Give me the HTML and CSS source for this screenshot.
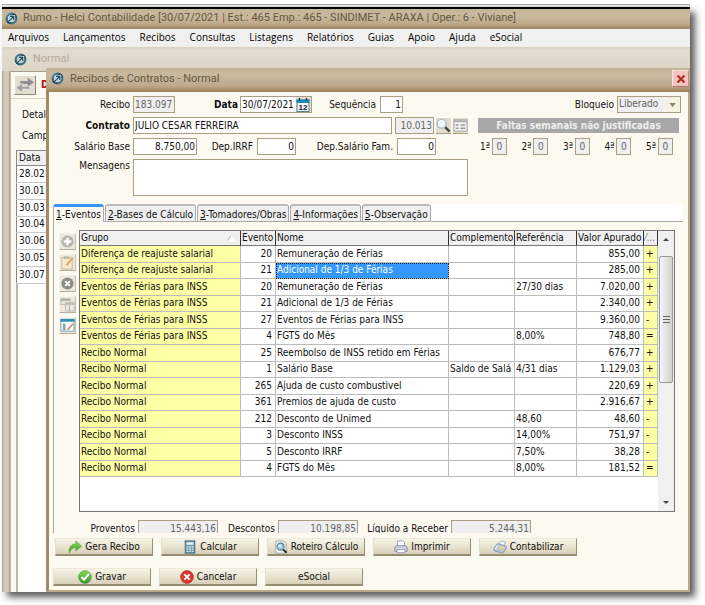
FILE: index.html
```html
<!DOCTYPE html>
<html lang="pt-BR">
<head>
<meta charset="utf-8">
<title>Rumo - Helci Contabilidade</title>
<link rel="stylesheet" href="styles.css">
</head>
<body>
<svg class="defs" aria-hidden="true">
  <defs>
    <linearGradient id="teal" x1="0" y1="0" x2="1" y2="1"><stop offset="0" stop-color="#5f9fb4"/><stop offset=".5" stop-color="#123a50"/><stop offset="1" stop-color="#4d93ab"/></linearGradient>
    <linearGradient id="green" x1="0" y1="0" x2="0" y2="1"><stop offset="0" stop-color="#8fdc5a"/><stop offset="1" stop-color="#2f9422"/></linearGradient>
    <symbol id="logo" viewBox="0 0 14 14">
      <circle cx="7" cy="7" r="5.2" fill="#c5d0cf" stroke="url(#teal)" stroke-width="2.4"/>
      <path d="M3.6 10.4 9 5M5.4 4.4h4.2v4.2" fill="none" stroke="#fff" stroke-width="2.6"/>
      <path d="M3.2 10.8 9 5M5.4 4.6h4v4" fill="none" stroke="#1b4f68" stroke-width="1.5"/>
    </symbol>
  </defs>
</svg>
<div class="app">
  <header class="titlebar app-title"><svg class="logo"><use href="#logo"/></svg><span>Rumo - Helci Contabilidade [30/07/2021 | Est.: 465 Emp.: 465 - SINDIMET - ARAXA | Oper.: 6 - Viviane]</span></header>
  <nav class="menu">
    <a href="#">Arquivos</a><a href="#">Lançamentos</a><a href="#">Recibos</a><a href="#">Consultas</a><a href="#">Listagens</a><a href="#">Relatórios</a><a href="#">Guias</a><a href="#">Apoio</a><a href="#">Ajuda</a><a href="#">eSocial</a>
  </nav>
  <main class="desk">
    <section class="child">
      <header class="child-title"><svg class="logo"><use href="#logo"/></svg><span>Normal</span></header>
      <div class="child-body">
        <div class="child-tools">
          <button class="swap" type="button" aria-label="Alternar"><svg viewBox="0 0 22 16"><path d="M6 3.500h8V0l7 5-7 5V7H6z" fill="#8e8e8e"/><path d="M16 9.500H8V6l-7 5 7 5v-3.500h8z" fill="#a2a2a2" stroke="#e9e6de" stroke-width=".6"/></svg></button>
          <b>D</b>
        </div>
        <p class="side-label">Detal</p>
        <p class="side-label">Camp</p>
        <table class="dates">
          <thead><tr><th>Data</th></tr></thead>
          <tbody><tr><td>28.02</td></tr><tr><td>30.01</td></tr><tr><td>30.03</td></tr><tr><td>30.04</td></tr><tr><td>30.06</td></tr><tr><td>30.05</td></tr><tr><td>30.07</td></tr></tbody>
        </table>
        <div class="blank"></div>
      </div>
    </section>

    <section class="dialog">
      <header class="titlebar"><svg class="logo"><use href="#logo"/></svg><span>Recibos de Contratos - Normal</span>
        <button class="close" type="button" aria-label="Fechar"><svg viewBox="0 0 10 10"><path d="M1.5 1.5l7 7M8.5 1.5l-7 7" stroke="#b3262b" stroke-width="2"/></svg></button>
      </header>
      <form class="dialog-body">
        <div class="form">
          <div class="form-main">
            <div class="row">
              <label class="lead" for="recibo">Recibo</label><input class="off w-num" id="recibo" value="183.097" readonly>
              <label class="strong gap-date" for="data">Data</label>
              <span class="datebox"><input id="data" value="30/07/2021"><button type="button" aria-label="Calendário"><svg viewBox="0 0 14 14"><rect x="1" y="2" width="12" height="11.500" fill="#f4f4f4" stroke="#5f7f92"/><rect x=".5" y="1.500" width="13" height="3.500" fill="#1f8cb8"/><path d="M3.500 0v3M10.500 0v3" stroke="#17425b" stroke-width="1.400"/><text x="7" y="12" text-anchor="middle" class="cal">12</text></svg></button></span>
              <label class="gap-seq" for="seq">Sequência</label><input class="num w-seq" id="seq" value="1">
            </div>
            <div class="row">
              <label class="lead strong" for="contrato">Contrato</label><input class="grow" id="contrato" value="JULIO CESAR FERREIRA">
              <input class="off num w-code" aria-label="Código do contrato" value="10.013" readonly>
              <button class="mini" type="button" aria-label="Pesquisar"><svg viewBox="0 0 16 16"><path d="M9.500 9.500l5 5" stroke="#444" stroke-width="2.600"/><circle cx="6" cy="6" r="4.800" fill="#eef8fd" stroke="#a9bcc6" stroke-width="1.500"/></svg></button>
              <button class="mini" type="button" aria-label="Ficha"><svg viewBox="0 0 16 16"><rect x="1" y="2" width="14" height="12" fill="#f2f2f2" stroke="#a0a0a0"/><path d="M1 3.500h14" stroke="#aaa" stroke-width="2"/><path d="M3 7.500h3M8 7.500h5M3 11h3M8 11h5" stroke="#999" stroke-width="1.500"/></svg></button>
            </div>
            <div class="row">
              <label class="lead" for="salario">Salário Base</label><input class="num w-sal" id="salario" value="8.750,00">
              <label class="gap-irrf" for="irrf">Dep.IRRF</label><input class="num w-dep" id="irrf" value="0">
              <label class="gap-fam" for="fam">Dep.Salário Fam.</label><input class="num w-dep" id="fam" value="0">
            </div>
            <div class="row tall">
              <label class="lead" for="msg">Mensagens</label><textarea class="grow" id="msg"></textarea>
            </div>
          </div>
          <div class="form-side">
            <div class="row end"><label for="bloq">Bloqueio</label><span class="selbox"><select id="bloq"><option>Liberado</option></select><svg viewBox="0 0 8 5"><path d="M0 0h8L4 5z" fill="#8a8068"/></svg></span></div>
            <div class="banner">Faltas semanais não justificadas</div>
            <div class="row weeks">
              <label>1ª <input class="off" value="0" readonly></label><label>2ª <input class="off" value="0" readonly></label><label>3ª <input class="off" value="0" readonly></label><label>4ª <input class="off" value="0" readonly></label><label>5ª <input class="off" value="0" readonly></label>
            </div>
          </div>
        </div>

        <div class="tabs" role="tablist">
          <button type="button" role="tab" aria-selected="true"><u>1</u>-Eventos</button><button type="button" role="tab"><u>2</u>-Bases de Cálculo</button><button type="button" role="tab"><u>3</u>-Tomadores/Obras</button><button type="button" role="tab"><u>4</u>-Informações</button><button type="button" role="tab"><u>5</u>-Observação</button>
        </div>

        <div class="panel">
          <div class="events">
            <div class="tools">
              <button type="button" aria-label="Incluir"><svg viewBox="0 0 16 16"><circle cx="8" cy="8" r="6.500" fill="#b5b5b0"/><path d="M8 4v8M4 8h8" stroke="#fff" stroke-width="2.600"/></svg></button>
              <button type="button" aria-label="Editar"><svg viewBox="0 0 16 16"><rect x="2" y="3" width="11" height="12" fill="#f6ead0" stroke="#cdb78c"/><rect x="4" y="1.500" width="6" height="2.500" fill="#b9b2a2"/><path d="M7 11l6.500-8" stroke="#dfa46a" stroke-width="2"/></svg></button>
              <button type="button" aria-label="Excluir"><svg viewBox="0 0 16 16"><circle cx="8" cy="8" r="6.500" fill="#8b8b88"/><path d="M5.500 5.500l5 5M10.500 5.500l-5 5" stroke="#fff" stroke-width="2"/></svg></button>
              <button type="button" aria-label="Duplicar"><svg viewBox="0 0 16 16"><rect x="1" y="2" width="10" height="6" fill="#e8e6e0" stroke="#bdbab2"/><path d="M1 3h10" stroke="#aaa" stroke-width="2"/><rect x="6" y="6" width="9" height="9" fill="#efede6" stroke="#bdbab2"/><path d="M6 7.500h9M10 9v6" stroke="#b5b2a8" stroke-width="1.500"/></svg></button>
              <button type="button" aria-label="Detalhar"><svg viewBox="0 0 16 16"><rect x="1" y="2" width="14" height="12" fill="#fff" stroke="#6fa0b8"/><path d="M.5 2.500h15" stroke="#2f8fba" stroke-width="3"/><path d="M3 6h3v7H3z" fill="#8fa3b4"/><path d="M8 13l6-7" stroke="#d89a6c" stroke-width="2"/></svg></button>
            </div>
            <div class="gridbox">
              <table class="grid">
                <colgroup><col class="c-grupo"><col class="c-ev"><col><col class="c-comp"><col class="c-ref"><col class="c-val"><col class="c-sig"></colgroup>
                <thead><tr><th><span class="sorted">Grupo <svg viewBox="0 0 9 7"><path d="M4.500 .5l4 6h-8z" fill="#fff" stroke="#fff"/><path d="M.5 6.500l4-6" stroke="#999"/></svg></span></th><th>Evento</th><th>Nome</th><th>Complemento</th><th>Referência</th><th>Valor Apurado</th><th><span class="dim">⁄...</span></th></tr></thead>
                <tbody>
                  <tr><td>Diferença de reajuste salarial</td><td>20</td><td>Remuneração de Férias</td><td></td><td></td><td>855,00</td><td>+</td></tr>
                  <tr><td>Diferença de reajuste salarial</td><td>21</td><td class="sel">Adicional de 1/3 de Férias</td><td></td><td></td><td>285,00</td><td>+</td></tr>
                  <tr><td>Eventos de Férias para INSS</td><td>20</td><td>Remuneração de Férias</td><td></td><td>27/30 dias</td><td>7.020,00</td><td>+</td></tr>
                  <tr><td>Eventos de Férias para INSS</td><td>21</td><td>Adicional de 1/3 de Férias</td><td></td><td></td><td>2.340,00</td><td>+</td></tr>
                  <tr><td>Eventos de Férias para INSS</td><td>27</td><td>Eventos de Férias para INSS</td><td></td><td></td><td>9.360,00</td><td>-</td></tr>
                  <tr><td>Eventos de Férias para INSS</td><td>4</td><td>FGTS do Mês</td><td></td><td>8,00%</td><td>748,80</td><td>=</td></tr>
                  <tr><td>Recibo Normal</td><td>25</td><td>Reembolso de INSS retido em Férias</td><td></td><td></td><td>676,77</td><td>+</td></tr>
                  <tr><td>Recibo Normal</td><td>1</td><td>Salário Base</td><td>Saldo de Salá</td><td>4/31 dias</td><td>1.129,03</td><td>+</td></tr>
                  <tr><td>Recibo Normal</td><td>265</td><td>Ajuda de custo combustivel</td><td></td><td></td><td>220,69</td><td>+</td></tr>
                  <tr><td>Recibo Normal</td><td>361</td><td>Premios de ajuda de custo</td><td></td><td></td><td>2.916,67</td><td>+</td></tr>
                  <tr><td>Recibo Normal</td><td>212</td><td>Desconto de Unimed</td><td></td><td>48,60</td><td>48,60</td><td>-</td></tr>
                  <tr><td>Recibo Normal</td><td>3</td><td>Desconto INSS</td><td></td><td>14,00%</td><td>751,97</td><td>-</td></tr>
                  <tr><td>Recibo Normal</td><td>5</td><td>Desconto IRRF</td><td></td><td>7,50%</td><td>38,28</td><td>-</td></tr>
                  <tr><td>Recibo Normal</td><td>4</td><td>FGTS do Mês</td><td></td><td>8,00%</td><td>181,52</td><td>=</td></tr>
                </tbody>
              </table>
              <div class="scroll">
                <svg viewBox="0 0 6 3"><path d="M0 3h6L3 0z" fill="#444"/></svg>
                <div class="thumb"><i></i></div>
                <svg viewBox="0 0 6 3"><path d="M0 0h6L3 3z" fill="#444"/></svg>
              </div>
            </div>
          </div>
          <div class="totals">
            <label for="prov">Proventos</label><input class="off num" id="prov" value="15.443,16" readonly>
            <label for="desc">Descontos</label><input class="off num" id="desc" value="10.198,85" readonly>
            <label for="liq">Líquido a Receber</label><input class="off num" id="liq" value="5.244,31" readonly>
          </div>
        </div>

        <div class="actions first">
          <button type="button"><svg viewBox="0 0 16 16"><path d="M1.500 15C.5 8 4 4.500 9 4.500V1l6.500 6L9 12.500V9C5.500 8.800 3.500 10.500 1.500 15z" fill="url(#green)" stroke="#4fa53c" stroke-width=".7"/></svg>Gera Recibo</button>
          <button type="button"><svg viewBox="0 0 16 16"><rect x="2.500" y="1" width="11" height="14" fill="#6d98ad" stroke="#3c6478"/><rect x="4" y="2.500" width="8" height="3" fill="#e3f2f6"/><path d="M4 8h8M4 10.500h8M4 13h8" stroke="#d7e8ee" stroke-width="1.500" stroke-dasharray="2 1"/></svg>Calcular</button>
          <button type="button"><svg viewBox="0 0 16 16"><path d="M2 1h9l3 3v11H2z" fill="#f1f3f4" stroke="#9aa3a8"/><path d="M10 10.500l4.500 4" stroke="#333" stroke-width="2.400"/><circle cx="7.500" cy="7.500" r="4" fill="#9fd0ec" stroke="#5d7c8e" stroke-width="1.300"/><circle cx="6.500" cy="6.500" r="1.500" fill="#e9f7ff"/></svg>Roteiro Cálculo</button>
          <button type="button"><svg viewBox="0 0 16 16"><path d="M4 8V1h6l2 2v5z" fill="#fff" stroke="#8d97b0"/><path d="M1 8l2-1.500h10L15 8v5H1z" fill="#ced2de" stroke="#7e86a0"/><path d="M3.500 11h9v3.500h-9z" fill="#fff" stroke="#8d97b0"/></svg>Imprimir</button>
          <button type="button"><svg viewBox="0 0 16 16"><path d="M7 5l2.500-4 5 1.500-3 5z" fill="#fff" stroke="#9aa6b4"/><path d="M1 10l4-6 10 3v3l-4 5-9-2.500z" fill="#b5c6d8" stroke="#7e90a6"/><path d="M8 7l5 1.500-2 3-5-1.500z" fill="#ecd48a"/><path d="M2.500 10.500l3-4.500" stroke="#eef3f8" stroke-width="1.500"/></svg>Contabilizar</button>
        </div>
        <div class="actions">
          <button type="submit"><svg viewBox="0 0 16 16"><circle cx="8" cy="8" r="7.300" fill="url(#green)" stroke="#4a9a5a" stroke-width=".7"/><path d="M4 8l3 3 5.500-6.500" fill="none" stroke="#fff" stroke-width="2.400"/></svg>Gravar</button>
          <button type="button"><svg viewBox="0 0 16 16"><circle cx="8" cy="8" r="7.300" fill="#d9392f" stroke="#a8231f" stroke-width=".7"/><path d="M5 5l6 6M11 5l-6 6" stroke="#fff" stroke-width="2.400"/></svg>Cancelar</button>
          <button type="button">eSocial</button>
        </div>
      </form>
    </section>
  </main>
</div>
</body>
</html>
```
FILE: styles.css
```css
* { box-sizing: border-box; }
body {
  margin: 0;
  padding: 2px 15px 14px 2px;
  background: #fff;
  color: #111;
  font: 10px/14px "DejaVu Sans Condensed", "DejaVu Sans", sans-serif;
}
button, input, select, textarea { font: inherit; color: inherit; margin: 0; border-radius: 0; }
button { padding: 0; border: 0; background: none; }
svg { display: block; flex: none; }
.defs { position: absolute; width: 0; height: 0; }
.strong { font-weight: bold; }

.app {
  border-top: 2px solid #000;
  margin-top: 5px;
  box-shadow: 5px 5px 7px rgba(0, 0, 0, .65), 0 -2px 0 #e4e4e4, 0 -3px 0 #aaa;
  background: #fbf8ef;
}
.titlebar {
  display: flex;
  align-items: center;
  gap: 6px;
  height: 24px;
  padding: 0 1px 3px 5px;
  background: linear-gradient(#c4b397, #c9ba9f 30%, #bda98a 75%, #9c8158);
  color: #66583f;
  font: 11px/16px Roboto, "Open Sans", sans-serif;
}
.app-title { height: 20px; padding: 0 3px 2px; gap: 5px; }
.logo { width: 13px; height: 13px; }
.menu {
  display: flex;
  gap: 14px;
  height: 18px;
  padding: 0 6px;
  background: #f0f0f0;
  font: 10px/16px "Open Sans", "Noto Sans", sans-serif;
}
.menu a { color: #000; text-decoration: none; }

.desk { display: grid; }
.child, .dialog { grid-area: 1 / 1; min-width: 0; }
.child {
  display: flex;
  flex-direction: column;
  padding-left: 9px;
  background: linear-gradient(90deg, #b5a998, #d6ccbe 3px, #d0c4b4 7px, #8f8068 8px, #fbf8ef 9px);
}
.child-title {
  display: flex;
  align-items: center;
  gap: 6px;
  height: 24px;
  margin-left: -9px;
  padding: 0 12px;
  background: linear-gradient(#d9d0c2, #e3dccf 15%, #ddd5c6);
  color: #b5aa98;
  font: 11px/16px Roboto, "Open Sans", sans-serif;
}
.child-body { flex: 1; display: flex; flex-direction: column; width: 36px; overflow: hidden; }
.child-tools {
  display: flex;
  align-items: center;
  gap: 5px;
  height: 28px;
  padding-left: 3px;
  border-top: 1px solid #a89c88;
  border-bottom: 1px solid #d8d2c4;
  color: #b01414;
}
.swap { width: 22px; height: 20px; background: #e3ddd0; border: 1px solid; border-color: #fff #8e8676 #8e8676 #fff; }
.swap svg { width: 20px; height: 16px; }
.side-label { margin: 9px 0 -2px 11px; line-height: 14px; }
.dates { width: 100%; height: 134px; margin-top: 9px; margin-left: 5px; border-collapse: collapse; background: #fff; }
.dates th, .dates td { padding: 0 2px; text-align: left; font-weight: normal; line-height: 14px; border: 1px solid #c8c8c8; border-left-color: #888; }
.dates th { background: #f0f0f0; border-color: #888; }
.blank { flex: 1; margin-left: 5px; background: #fff; border-left: 2px solid #b8b8ac; }

.dialog {
  display: flex;
  flex-direction: column;
  margin: 21px 0 0 44px;
  border: solid #bba988;
  border-width: 0 2px 2px 3px;
  border-left-color: #a08a68;
  background: #fcf9f0;
}
.dialog .titlebar { margin: 0 -2px 0 -3px; }
.close { display: grid; place-items: center; width: 17px; height: 17px; margin-left: auto; background: #f5c3c0; border: 1px solid; border-color: #fbe6e2 #c08b84 #a87870 #fbe6e2; }
.close svg { width: 10px; height: 10px; }
.dialog-body { padding: 4px 5px 4px 4px; }

.form { display: flex; gap: 10px; padding: 0 2px; }
.form-main { flex: 1; display: grid; gap: 4px; min-width: 0; }
.form-side { width: 203px; display: grid; align-content: start; gap: 4px; }
.row { display: flex; align-items: center; height: 17px; min-width: 0; }
.row.tall { height: 37px; align-items: stretch; }
.lead { width: 78px; padding-right: 3px; text-align: right; white-space: nowrap; }
input, textarea { min-width: 0; height: 17px; padding: 0 1px 1px; border: 1px solid #a89e82; background: #fff; }
input.off { background: #efefef; color: #666; }
.num { text-align: right; }
textarea { resize: none; height: 37px; }
.grow { flex: 1; }
.w-num { width: 42px; }
.w-seq { width: 23px; margin-left: 4px; }
.w-code { width: 39px; margin-left: 3px; }
.w-sal { width: 64px; }
.w-dep { width: 39px; margin-left: 4px; }
.row .w-dep, .row .w-seq { flex: none; }
.gap-date { width: 65px; padding-right: 2px; text-align: right; }
.gap-seq { width: 64px; text-align: right; }
.gap-irrf { width: 56px; text-align: right; white-space: nowrap; }
.gap-fam { width: 97px; text-align: right; white-space: nowrap; }
.datebox { display: flex; width: 72px; height: 17px; border: 1px solid #a89e82; background: #fff; }
.datebox input { flex: 1; width: 50px; height: 15px; padding: 0 0 1px 1px; border: 0; }
.datebox button { width: 15px; background: #e5dfd0; }
.datebox svg { width: 14px; height: 14px; }
.cal { font: bold 8px "Liberation Sans", sans-serif; fill: #123; }
.mini { width: 15px; height: 16px; margin-left: 2px; background: #e3ddcd; border-bottom: 1px solid #a89e82; }
.mini svg { width: 15px; height: 15px; }

.end { justify-content: flex-end; gap: 3px; }
.selbox { position: relative; display: block; width: 64px; }
.selbox select { appearance: none; width: 100%; height: 17px; padding: 0 1px 1px; border: 1px solid #a89e82; background: linear-gradient(90deg, #efefef 46px, #f5f1e4 46px); color: #666; display: block; }
.selbox svg { position: absolute; right: 5px; top: 7px; width: 7px; height: 4px; }
.banner { height: 15px; margin: 1px 2px 1px 0; background: #a7a7a7; color: #eee; font-weight: bold; line-height: 16px; text-align: center; }
.weeks { justify-content: space-between; padding: 0 8px 0 2px; }
.weeks label { display: flex; align-items: center; gap: 2px; }
.weeks input { width: 15px; padding: 0 0 1px; text-align: center; }

.tabs { display: flex; gap: 1px; height: 18px; margin-top: 8px; background: #fff; border-bottom: 1px solid #aaa; }
.tabs button { height: 18px; padding: 2px 2px 0; border: 1px solid #aaa; border-top: 2px solid #bbb; border-radius: 3px 3px 0 0; background: #efefef; white-space: nowrap; line-height: 12px; }
.tabs button[aria-selected="true"] { padding: 1px 2px 0; background: #fcf9f0; border-color: #fcf9f0 #aaa; border-top: 3px solid #3595f5; border-bottom: 0; }

.panel { padding: 8px 8px 0 5px; border-left: 1px solid #aaa; }
.events { display: flex; gap: 3px; }
.tools { display: flex; flex-direction: column; gap: 4px; width: 17px; padding-top: 3px; }
.tools button { height: 17px; background: #ece8dc; border: 1px solid; border-color: #f5f2e8 #c5bfae #b5ae9a #f5f2e8; }
.tools svg { width: 15px; height: 15px; }
.gridbox { flex: 1; display: flex; align-items: flex-start; min-width: 0; min-height: 282px; border: 1px solid #777; background: #fff; }
.grid { flex: 1; width: 100%; min-width: 0; height: 246px; table-layout: fixed; border-collapse: separate; border-spacing: 0; }
.c-grupo { width: 161px; }
.c-ev { width: 35px; }
.c-comp { width: 66px; }
.c-ref { width: 62px; }
.c-val { width: 67px; }
.c-sig { width: 14px; }
.grid th, .grid td { padding: 0 3px 0 1px; overflow: hidden; white-space: nowrap; line-height: 14px; border: solid #bcbcbc; border-width: 0 1px 1px 0; font-weight: normal; text-align: left; }
.grid th { background: #f0f0f0; border-color: #333; border-bottom-color: #777; padding-right: 0; }
.grid td:first-child, .grid td:last-child { background: #ffffa5; }
.grid td:nth-child(2), .grid td:nth-child(6) { text-align: right; }
.grid td:nth-child(4) { padding-right: 0; }
.grid td:last-child { padding: 0 2px; }
.grid td.sel { background: #3399ff; color: #fff; outline: 1px dotted #123; outline-offset: -1px; }
.sorted { display: flex; justify-content: space-between; align-items: center; padding-right: 5px; }
.sorted svg { width: 8px; height: 6px; }
.dim { color: #777; }
.scroll { align-self: stretch; display: flex; flex-direction: column; align-items: center; width: 16px; padding: 7px 1px; background: #f0f0f0; }
.scroll svg { width: 6px; height: 3px; }
.thumb { display: grid; place-items: center; width: 100%; height: 127px; margin: 15px 0 auto; border: 1px solid #999; border-radius: 2px; background: linear-gradient(90deg, #f6f6f6, #d2d2d2); }
.thumb i { width: 7px; height: 7px; background: repeating-linear-gradient(#666 0 1px, transparent 1px 3px); }

.totals { display: flex; align-items: flex-start; height: 21px; padding-top: 8px; overflow: hidden; }
.totals label { width: 60px; padding: 2px 3px 0 0; text-align: right; white-space: nowrap; line-height: 14px; }
.totals label:first-child { width: 79px; }
.totals label:nth-of-type(3) { width: 93px; }
.totals input { width: 80px; }

.actions { display: flex; gap: 8px; margin-top: 12px; }
.actions.first { margin-top: 5px; padding-left: 2px; }
.actions button { display: flex; align-items: center; justify-content: center; gap: 3px; width: 98px; height: 18px; background: linear-gradient(#f7f3e6, #e9e3d0 50%, #d8d0ba); border: 1px solid; border-color: #efe9da #968c70 #968c70 #e5dfcd; border-bottom-width: 2px; white-space: nowrap; }
.actions svg { width: 14px; height: 14px; }
```
